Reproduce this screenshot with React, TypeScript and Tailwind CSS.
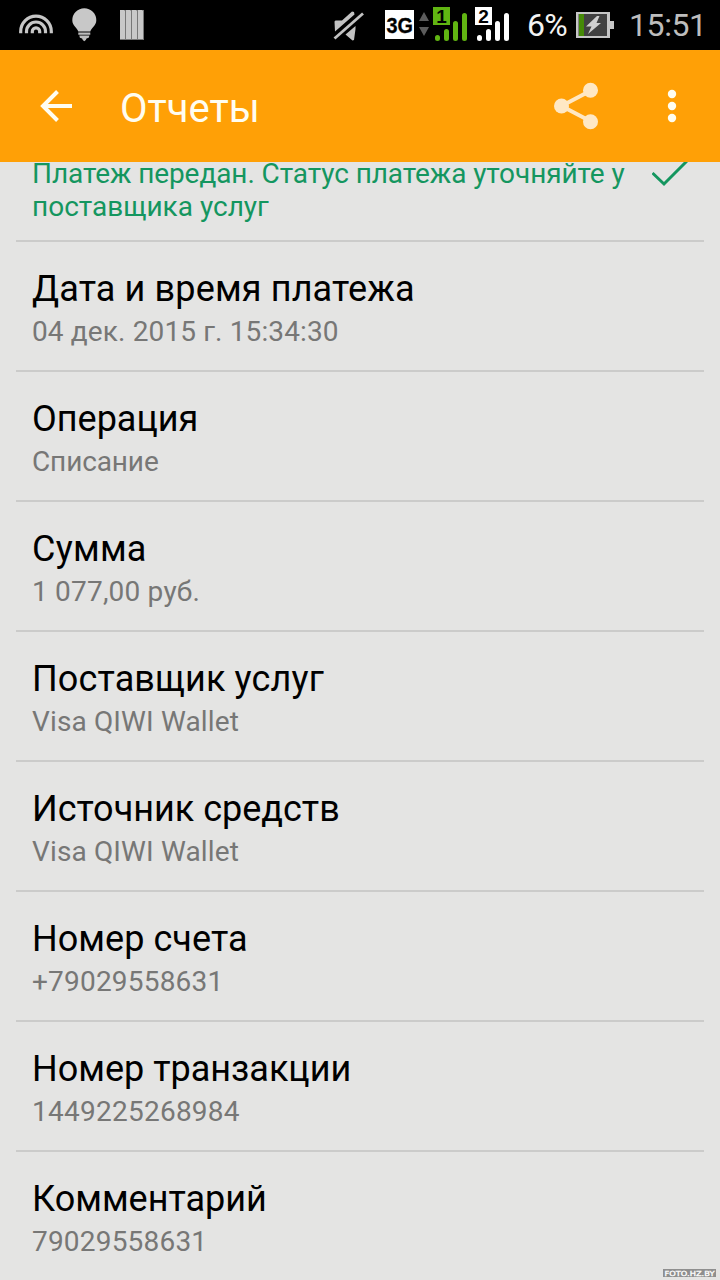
import React from 'react';
import { clsx } from 'clsx';

interface ReportField {
  label: string;
  value: string;
  labelClass?: string;
  valueClass?: string;
}

const fields: ReportField[] = [
  { label: 'Дата и время платежа', value: '04 дек. 2015 г. 15:34:30', labelClass: 'tracking-[0.14px]', valueClass: 'tracking-[0.13px]' },
  { label: 'Операция', value: 'Списание', valueClass: 'tracking-[-0.12px]' },
  { label: 'Сумма', value: '1 077,00 руб.', labelClass: 'tracking-[0.25px]', valueClass: 'tracking-[0.2px]' },
  { label: 'Поставщик услуг', value: 'Visa QIWI Wallet', labelClass: 'tracking-[0.14px]', valueClass: 'tracking-[0.14px]' },
  { label: 'Источник средств', value: 'Visa QIWI Wallet', valueClass: 'tracking-[0.14px]' },
  { label: 'Номер счета', value: '+79029558631', labelClass: 'tracking-[0.05px]', valueClass: 'tracking-[0.2px]' },
  { label: 'Номер транзакции', value: '1449225268984', valueClass: 'tracking-[0.25px]' },
  { label: 'Комментарий', value: '79029558631', valueClass: 'tracking-[0.2px]' },
];

function StatusBar() {
  return (
    <div className="flex h-[50px] shrink-0 items-center bg-black">
      <svg className="h-[50px] w-[160px]" viewBox="0 0 160 50" fill="none">
        <g stroke="#c6c6c6" strokeWidth="3.2">
          <path d="M20.700 33.300V31.500a15.300 15.300 0 0 1 30.600 0v1.800" />
          <path d="M26.500 33.300V31.500a9.500 9.500 0 0 1 19 0v1.800" />
          <path d="M32.300 33.300V31.500a3.700 3.700 0 0 1 7.400 0v1.800" />
        </g>
        <path d="M84.300 8.300A12 12 0 0 0 72.300 20.300c0 5.500 5 7.500 6 11.200h12c1-3.700 6-5.700 6-11.200A12 12 0 0 0 84.300 8.300z" fill="#c8c8c8" />
        <path d="M78.300 32.500h12v2.300h-12zM79.300 35.600h10.200l-.8 2.200-2.200.8-.7 1.400-1.500 1.200-1.500-1.200-.7-1.400-2.200-.8z" fill="#bdbdbd" />
        {[120, 126, 132, 138].map((x) => (
          <g key={x}>
            <path d={`M${x} 10h6v30h-6z`} fill="#777" />
            <path d={`M${x} 10h4l1 1v28h-5z`} fill="#c8c8c8" />
          </g>
        ))}
      </svg>

      <svg className="ml-[170px] h-[50px] w-[35px]" viewBox="330 0 35 50">
        <path d="M334.500 21.500l1-1h6.500L352 11.500l2 .5.500 2.500L335 31.500zM345.500 34.500l10-8.500v3l-1.500 11-1.500.5z" fill="#c2c2c2" />
        <path d="M334.500 38.500L363 13.500" stroke="#c2c2c2" strokeWidth="2.800" />
      </svg>

      <svg className="ml-5 h-[50px] w-[29px]" viewBox="385 0 29 50">
        <path d="M385 10h29v29h-29z" fill="#fff" />
        <text x="386.500" y="32.500" textLength="26.500" lengthAdjust="spacingAndGlyphs" stroke="#000" strokeWidth=".3" className="font-['Liberation_Sans'] text-[22px] font-bold">3G</text>
      </svg>

      <svg className="ml-1 h-[50px] w-[97px]" viewBox="418 0 97 50">
        <path d="M419 21l5-9 5 9zM419 27h10l-5 9z" fill="#5c5c5c" />
        <path d="M433 7h17v18h-17z" fill="#61b512" />
        <path d="M475 7h17v18h-17z" fill="#fff" />
        <g strokeWidth="5" strokeLinecap="round" stroke="#61b512">
          <path d="M437.500 37.500v1M446.500 31.500v7M455.500 23.500v15M464.500 15.500v23" />
        </g>
        <g strokeWidth="5" strokeLinecap="round" stroke="#fff">
          <path d="M479.500 37.500v1M488.500 31.500v7M497.500 23.500v15M506.500 15.500v23" />
        </g>
        <text x="441.500" y="22.500" textAnchor="middle" className="font-['Liberation_Sans'] text-[19px] font-bold">1</text>
        <text x="483.500" y="22.500" textAnchor="middle" className="font-['Liberation_Sans'] text-[19px] font-bold">2</text>
      </svg>

      <span className="ml-[12px] w-[40px] text-[32px] leading-[50px] tracking-[-0.8px] whitespace-nowrap text-[#f3f3f3]">6%</span>

      <svg className="ml-[9px] h-[50px] w-[38px]" viewBox="576 0 38 50">
        <path d="M576 12h34v9h4v8h-4v9h-34z" fill="#c6c6c6" />
        <path d="M578.500 14h28.500v22h-28.500z" fill="#414141" />
        <path d="M579 14h5v22h-5z" fill="#458a06" />
        <path d="M597 16h2.500L596.500 23H601L588 34l3.500-7.500H586z" fill="#d0d0d0" />
      </svg>

      <span className="ml-[15px] text-[32px] leading-[50px] tracking-[-0.4px] whitespace-nowrap text-[#bdbdbd]">15:51</span>
    </div>
  );
}

function AppBar() {
  return (
    <header className="flex h-28 shrink-0 items-center bg-[#ffa006] text-[#fffdf0]">
      <svg className="ml-10 h-8 w-8" viewBox="0 0 32 32" fill="none" stroke="currentColor" strokeWidth="4">
        <path d="M32 16H3M17.500 1.500L3 16l14.500 14.500" />
      </svg>
      <h1 className="ml-12 pt-1.5 text-[40px] leading-[48px]">Отчеты</h1>
      <svg className="ml-auto h-12 w-[45px]" viewBox="0 0 45 48" fill="#ffe8c4">
        <path d="M37 8.500L7.500 24 37 39.500" fill="none" stroke="#ffe8c4" strokeWidth="4" />
        <circle cx="7.500" cy="24" r="7.500" />
        <circle cx="36.500" cy="8.300" r="7.500" />
        <circle cx="36.500" cy="39.700" r="7.500" />
      </svg>
      <svg className="mr-11 ml-[69px] h-8 w-2" viewBox="0 0 8 32" fill="currentColor" overflow="visible">
        <circle cx="4" cy="4" r="4.200" />
        <circle cx="4" cy="16" r="4.200" />
        <circle cx="4" cy="28" r="4.200" />
      </svg>
    </header>
  );
}

function FieldRow({ field, last }: { field: ReportField; last: boolean }) {
  return (
    <div className={clsx('h-[130px] shrink-0 px-4 pt-[26px]', !last && 'border-b-2 border-[#cbcbca]')}>
      <div className="text-[36px] leading-[42px] whitespace-nowrap text-black">
        <span className={field.labelClass}>{field.label}</span>
      </div>
      <div className="mt-[5px] text-[28px] leading-[33px] whitespace-nowrap text-[#777776]">
        <span className={field.valueClass}>{field.value}</span>
      </div>
    </div>
  );
}

export default function App() {
  return (
    <div className="relative flex h-[1280px] w-[720px] flex-col overflow-hidden bg-[#e4e4e3] font-[Roboto,sans-serif]">
      <StatusBar />
      <AppBar />
      <main className="flex min-h-0 flex-1 flex-col px-4">
        {/* Current payment status */}
        <div className="flex h-20 shrink-0 items-start border-b-2 border-[#cbcbca] pl-4 text-[#14965f]">
          <p className="-mt-[5px] w-[620px] text-[28px] leading-[33px] whitespace-nowrap">
            <span className="tracking-[-0.09px]">Платеж передан. Статус платежа уточняйте у</span>
            <br />
            поставщика услуг
          </p>
          <svg className="h-[27px] w-9" viewBox="0 5 36 27" fill="none" stroke="currentColor" strokeWidth="3">
            <path d="M.5 16L12 27 36 3" />
          </svg>
        </div>
        {fields.map((field, idx) => (
          <FieldRow key={field.label} field={field} last={idx === fields.length - 1} />
        ))}
      </main>
      <svg className="absolute right-1 bottom-[3px] h-2 w-[53px]" viewBox="0 0 53 8">
        <path d="M0 0h53v8H0z" fill="#8f8f8f" />
        <text x="1.500" y="6.500" textLength="50" lengthAdjust="spacingAndGlyphs" fill="#fff" stroke="#fff" strokeWidth=".3" className="font-['DejaVu_Sans'] text-[7px]">
          FOTO.HZ.BY
        </text>
      </svg>
    </div>
  );
}
